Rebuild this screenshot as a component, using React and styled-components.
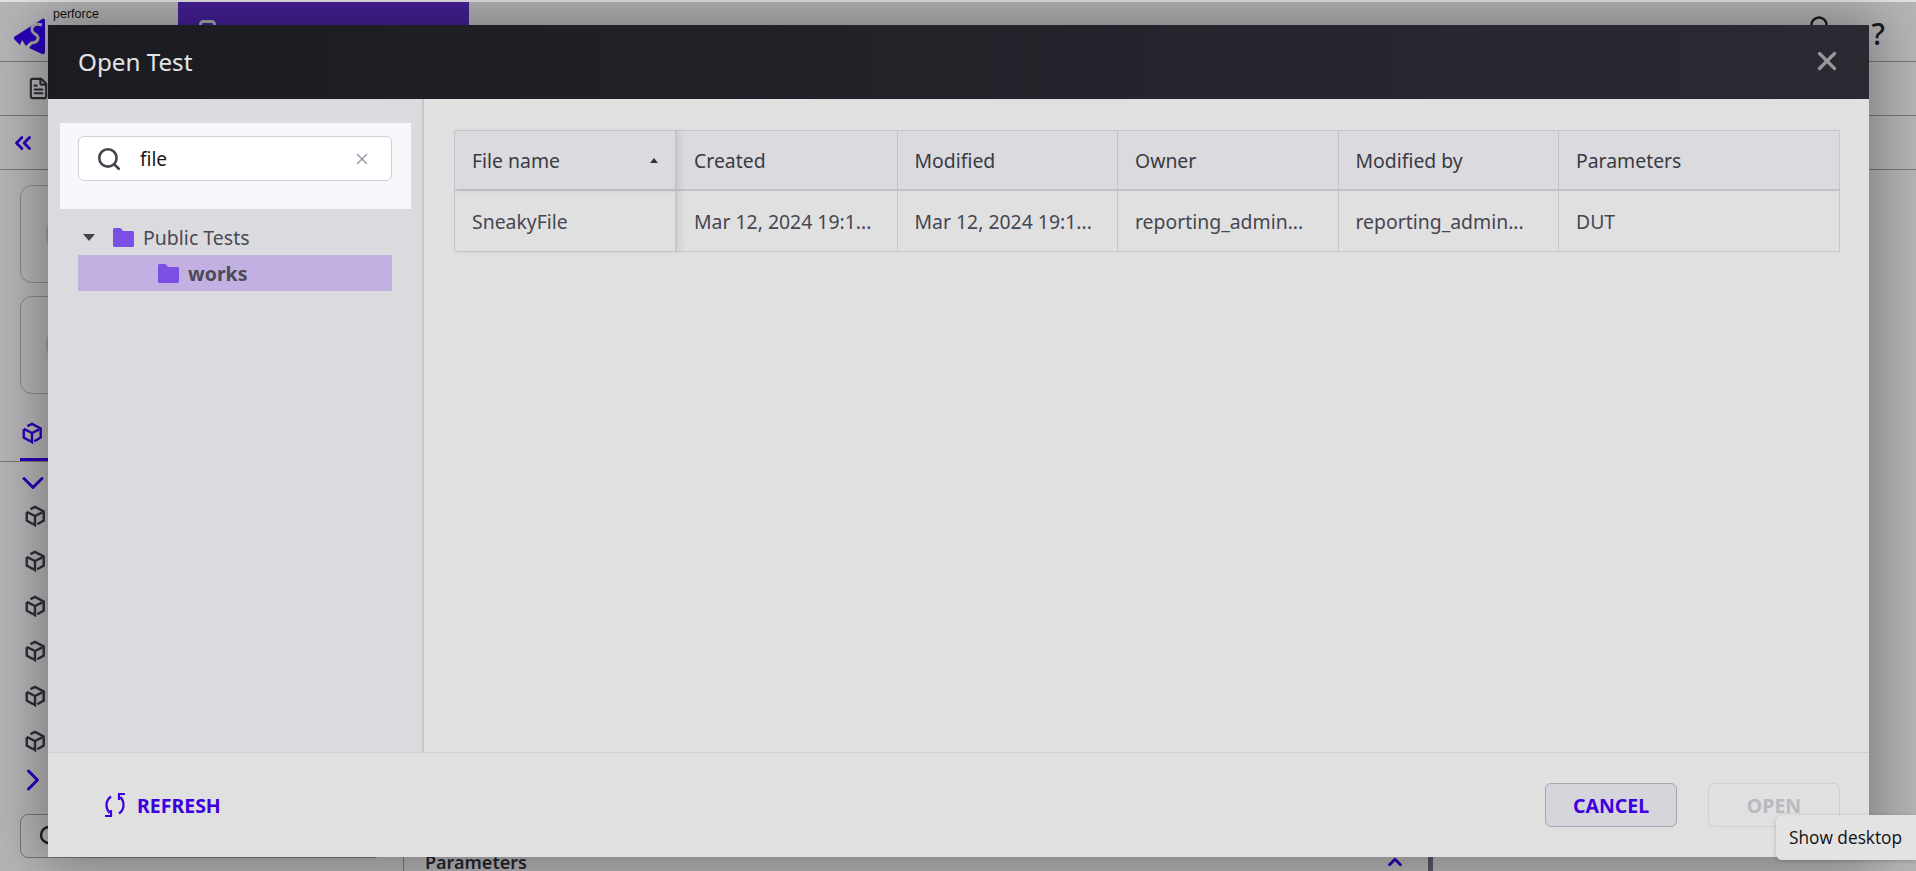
import React from "react";
import styled, { createGlobalStyle } from "styled-components";
import { ChevronDown, ChevronRight, ChevronUp, ChevronsLeft, FileText, Search, X } from "lucide-react";

const columns = ["Created", "Modified", "Owner", "Modified by", "Parameters"];
const rowCells = ["Mar 12, 2024 19:1...", "Mar 12, 2024 19:1...", "reporting_admin...", "reporting_admin...", "DUT"];

const CubeIcon = ({ size = 22, color = "#2e2e3a" }) => (
  <svg width={size} height={size} viewBox="0 0 24 24" fill="none" stroke={color} strokeWidth="2.6">
    <path d="M7 4.5 12 2l9.5 5v10L14.5 21" />
    <path d="M3 8v9l6 3.5" />
    <path d="M3 7.5 12 12l8-4" />
    <path d="M12 12v10l-3-2" />
  </svg>
);

const FolderIcon = () => (
  <svg width="21" height="19" viewBox="0 0 21 19">
    <path
      d="M1.5 0h5.2c.8 0 1.3.4 1.8 1l1.4 2h9.6c.8 0 1.5.7 1.5 1.5v13c0 .8-.7 1.500-1.500 1.500h-18C.7 19 0 18.300 0 17.500V1.500C0 .7.7 0 1.500 0z"
      fill="#7b4fe3"
    />
  </svg>
);

const RefreshIcon = () => (
  <svg width="22" height="24" viewBox="0 0 22 24" fill="none" stroke="#3d00e0" strokeWidth="2.2">
    <path d="M7 3.500C1.500 7.500 1 14.500 5.500 20" />
    <path d="M1 23h6v-6" />
    <path d="M15 20.500C20.500 16.500 21 9.500 16.500 4" />
    <path d="M21 1h-6v6" />
  </svg>
);

const LogoIcon = () => (
  <svg width="32" height="37" viewBox="0 0 32 37">
    <path
      d="M0 19 29 .5Q31 0 31 3v31q0 3-3 2L15 30l4-5-4 0-3 3-4-6-2 5-6-6z"
      fill="#2a00b8"
    />
    <path d="M28 7C18 4 15 12 21 16c5 3 4 9-5 9" fill="none" stroke="#a4a4a6" strokeWidth="3" />
  </svg>
);

const UserIcon = () => (
  <svg width="18" height="24" viewBox="0 0 18 24" fill="none" stroke="#1b1b20" strokeWidth="2.4">
    <circle cx="9" cy="9" r="7.5" />
  </svg>
);

const TabIcon = () => (
  <svg width="17" height="24" viewBox="0 0 17 24" fill="none" stroke="#a8a8b0" strokeWidth="3">
    <rect x="1.500" y="1.500" width="14" height="21" rx="3" />
  </svg>
);

const App = () => (
  <Screen>
    <GlobalStyle />
    <TopStrip />
    <TopBar>
      <Brand>
        <LogoIcon />
        <BrandName>perforce</BrandName>
      </Brand>
      <ActiveTab>
        <TabIcon />
      </ActiveTab>
      <TopActions>
        <UserIcon />
        <HelpMark>?</HelpMark>
      </TopActions>
    </TopBar>
    <ToolBar>
      <FileText size={23} color="#2b2b33" strokeWidth={2.2} />
    </ToolBar>
    <CollapseBar>
      <ChevronsLeft size={26} color="#2a00b8" strokeWidth={2.6} />
    </CollapseBar>
    <Body>
      <Sidebar>
        <SummaryCard>
          <CardDot />
        </SummaryCard>
        <SummaryCard>
          <CardDot />
        </SummaryCard>
        <SideTabs>
          <SideTab>
            <CubeIcon color="#2a00b8" />
          </SideTab>
        </SideTabs>
        <SideTree>
          <TreeToggle $height={20}>
            <ChevronDown size={36} color="#2a00b8" strokeWidth={2} />
          </TreeToggle>
          {[0, 1, 2, 3, 4, 5].map(item => (
            <SideItem key={item}>
              <CubeIcon />
            </SideItem>
          ))}
          <TreeToggle $height={34}>
            <ChevronRight size={36} color="#2a00b8" strokeWidth={2} />
          </TreeToggle>
        </SideTree>
        <SideSearch>
          <Search size={24} color="#1e1e26" strokeWidth={2.4} />
        </SideSearch>
      </Sidebar>
      <Center>
        <ParametersBar>
          <ParametersTitle>Parameters</ParametersTitle>
          <ChevronUp size={22} color="#2a00b8" strokeWidth={3} />
        </ParametersBar>
      </Center>
    </Body>

    <Modal>
      <ModalHeader>
        <ModalTitle>Open Test</ModalTitle>
        <X size={30} color="#98989c" strokeWidth={2.6} />
      </ModalHeader>
      <ModalBody>
        <Aside>
          <SearchPanel>
            <SearchBox>
              <Search size={26} color="#44444f" strokeWidth={2.4} />
              <SearchValue>file</SearchValue>
              <X size={18} color="#9c9cab" strokeWidth={2} />
            </SearchBox>
          </SearchPanel>
          <TreeRow $indent={0}>
            <Caret />
            <FolderIcon />
            <TreeLabel>Public Tests</TreeLabel>
          </TreeRow>
          <TreeRow $indent={80} $selected>
            <FolderIcon />
            <TreeLabel $selected>works</TreeLabel>
          </TreeRow>
        </Aside>
        <Content>
          <Table>
            <HeaderCell $first>
              File name
              <SortCaret />
            </HeaderCell>
            {columns.map(column => (
              <HeaderCell key={column}>{column}</HeaderCell>
            ))}
            <RowCell $first>SneakyFile</RowCell>
            {rowCells.map((cell, i) => (
              <RowCell key={i}>{cell}</RowCell>
            ))}
          </Table>
        </Content>
      </ModalBody>
      <ModalFooter>
        <RefreshButton>
          <RefreshIcon />
          REFRESH
        </RefreshButton>
        <FooterActions>
          <CancelButton>CANCEL</CancelButton>
          <OpenButton disabled>OPEN</OpenButton>
        </FooterActions>
      </ModalFooter>
    </Modal>

    <DesktopTooltip>Show desktop</DesktopTooltip>
  </Screen>
);

const GlobalStyle = createGlobalStyle`
  html, body {
    margin: 0;
    padding: 0;
    overflow: hidden;
  }

  * {
    box-sizing: border-box;
  }
`;

const Screen = styled.div`
  position: relative;
  display: flex;
  flex-direction: column;
  width: 1916px;
  height: 871px;
  overflow: hidden;
  background-color: #b5b5b7;
  font-family: "Noto Sans", sans-serif;
`;

const TopStrip = styled.div`
  flex: none;
  height: 2px;
  background-color: #e2e2e2;
`;

const TopBar = styled.div`
  flex: none;
  display: flex;
  align-items: stretch;
  height: 60px;
  border-bottom: 1px solid #77777b;
`;

const Brand = styled.div`
  position: relative;
  display: flex;
  align-items: flex-start;
  width: 178px;
  padding: 16px 0 0 14px;
`;

const BrandName = styled.span`
  position: absolute;
  top: 5px;
  left: 53px;
  color: #111;
  font-family: "Liberation Sans", sans-serif;
  font-size: 12.500px;
`;

const ActiveTab = styled.div`
  display: flex;
  align-items: flex-start;
  width: 291px;
  padding: 18px 0 0 21px;
  background-color: #452095;
`;

const TopActions = styled.div`
  display: flex;
  align-items: flex-start;
  gap: 44px;
  margin-left: auto;
  padding: 14px 31px 0 0;
`;

const HelpMark = styled.span`
  margin-top: -3px;
  color: #1b1b20;
  font-size: 30px;
  font-weight: 500;
  line-height: 41px;
`;

const ToolBar = styled.div`
  flex: none;
  display: flex;
  align-items: center;
  height: 54px;
  padding-left: 27px;
  border-bottom: 1px solid #77777b;
`;

const CollapseBar = styled.div`
  flex: none;
  display: flex;
  align-items: center;
  height: 54px;
  padding-left: 10px;
  border-bottom: 1px solid #77777b;
`;

const Body = styled.div`
  flex: 1;
  display: flex;
  min-height: 0;
`;

const Sidebar = styled.div`
  flex: none;
  display: flex;
  flex-direction: column;
  width: 404px;
  padding-top: 15px;
  border-right: 1px solid #77777b;
`;

const SummaryCard = styled.div`
  flex: none;
  display: flex;
  align-items: center;
  height: 98px;
  margin: 0 17px 13px 20px;
  padding-left: 25px;
  border: 1px solid #88888c;
  border-radius: 12px;
`;

const CardDot = styled.div`
  width: 50px;
  height: 50px;
  border-radius: 50%;
  background-color: #9a98a6;
`;

const SideTabs = styled.div`
  flex: none;
  display: flex;
  height: 55px;
  padding-left: 20px;
  border-bottom: 1px solid #77777b;
`;

const SideTab = styled.div`
  display: flex;
  align-items: center;
  width: 48px;
  padding: 0 0 0 1px;
  border-bottom: 3px solid #2a00b8;
`;

const SideTree = styled.div`
  flex: none;
  display: flex;
  flex-direction: column;
  padding: 11px 0 0 20px;
`;

const TreeToggle = styled.div`
  display: flex;
  align-items: center;
  height: ${({ $height }) => $height}px;
  margin-left: -5px;
`;

const SideItem = styled.div`
  display: flex;
  align-items: center;
  height: 45px;
  padding-left: 4px;
`;

const SideSearch = styled.div`
  flex: none;
  display: flex;
  align-items: center;
  height: 44px;
  margin: 17px 21px 0 20px;
  padding-left: 17px;
  border: 1px solid #77777b;
  border-radius: 8px;
`;

const Center = styled.div`
  flex: none;
  display: flex;
  flex-direction: column;
  justify-content: flex-end;
  width: 1029px;
  border-right: 5px solid #55556a;
`;

const ParametersBar = styled.div`
  display: flex;
  align-items: center;
  justify-content: space-between;
  height: 24px;
  margin-bottom: -3px;
  padding: 0 22px 0 21px;
`;

const ParametersTitle = styled.span`
  color: #26262e;
  font-size: 18px;
  font-weight: 600;
`;

const Modal = styled.div`
  position: absolute;
  top: 25px;
  left: 48px;
  display: flex;
  flex-direction: column;
  width: 1821px;
  height: 832px;
  background-color: #e0e0e0;
  box-shadow: 0 0 50px 8px rgba(0, 0, 0, 0.33);
`;

const ModalHeader = styled.div`
  flex: none;
  display: flex;
  align-items: center;
  justify-content: space-between;
  height: 74px;
  padding: 0 27px 2px 30px;
  background: linear-gradient(90deg, #1b1c21, #2a2a33);
`;

const ModalTitle = styled.h2`
  margin: 0;
  color: #e4e4e6;
  font-size: 24.200px;
  font-weight: 400;
`;

const ModalBody = styled.div`
  flex: 1;
  display: flex;
  min-height: 0;
`;

const Aside = styled.div`
  flex: none;
  width: 376px;
  padding: 24px 11px 0 12px;
  background-color: #dbdbdf;
  border-right: 2px solid #c6c6cb;
`;

const SearchPanel = styled.div`
  height: 86px;
  margin-bottom: 10px;
  padding: 13px 19px 0 18px;
  background-color: #f7f7fc;
`;

const SearchBox = styled.div`
  display: flex;
  align-items: center;
  height: 45px;
  padding: 0 20px 0 17px;
  border: 1px solid #cfcfd8;
  border-radius: 6px;
  background-color: #fff;
`;

const SearchValue = styled.span`
  flex: 1;
  margin-left: 18px;
  color: #17171b;
  font-size: 19px;
`;

const TreeRow = styled.div`
  display: flex;
  align-items: center;
  height: 36px;
  margin: 0 19px 0 18px;
  padding-left: ${({ $indent }) => $indent}px;
  background-color: ${({ $selected }) => ($selected ? "#c2b0e2" : "transparent")};
`;

const Caret = styled.span`
  width: 0;
  height: 0;
  margin: 0 18px 0 5px;
  border-top: 7px solid #44444f;
  border-left: 6px solid transparent;
  border-right: 6px solid transparent;
`;

const TreeLabel = styled.span`
  margin-left: 9px;
  color: #4a4a55;
  font-size: 19.500px;
  font-weight: ${({ $selected }) => ($selected ? 700 : 400)};
`;

const Content = styled.div`
  flex: 1;
  padding: 31px 29px 0 30px;
`;

const Table = styled.div`
  display: grid;
  grid-template-columns: 222px repeat(4, 220.500px) 1fr;
  grid-auto-rows: 60px;
  border: 1px solid #c6c6cc;
`;

const HeaderCell = styled.div`
  display: flex;
  align-items: center;
  justify-content: space-between;
  padding: 0 17px;
  border-right: ${({ $first }) => ($first ? 2 : 1)}px solid #c2c2c8;
  border-bottom: 2px solid #c2c2c8;
  background-color: #dadadf;
  color: #3a3a44;
  font-size: 19.400px;
  ${({ $first }) => $first && "box-shadow: 4px 0 6px rgba(0, 0, 0, 0.07); position: relative;"}

  &:nth-child(6) {
    border-right: 0;
  }
`;

const RowCell = styled.div`
  display: flex;
  align-items: center;
  padding: 0 17px;
  border-right: ${({ $first }) => ($first ? 2 : 1)}px solid #c6c6cc;
  color: #464652;
  font-size: 19.400px;
  white-space: nowrap;
  ${({ $first }) => $first && "box-shadow: 4px 0 6px rgba(0, 0, 0, 0.07); position: relative;"}

  &:last-child {
    border-right: 0;
  }
`;

const SortCaret = styled.span`
  width: 0;
  height: 0;
  border-bottom: 5px solid #33333c;
  border-left: 4.500px solid transparent;
  border-right: 4.500px solid transparent;
`;

const ModalFooter = styled.div`
  flex: none;
  display: flex;
  align-items: center;
  justify-content: space-between;
  height: 105px;
  padding: 0 29px 0 56px;
  border-top: 1px solid #cfcfd3;
`;

const RefreshButton = styled.div`
  display: flex;
  align-items: center;
  gap: 11px;
  color: #3d00e0;
  font-size: 19.500px;
  font-weight: 700;
`;

const FooterActions = styled.div`
  display: flex;
  gap: 31px;
`;

const CancelButton = styled.button`
  width: 132px;
  height: 44px;
  padding: 0;
  border: 1px solid #a6a6b2;
  border-radius: 6px;
  background-color: #d6d5dc;
  color: #3d00e0;
  font-family: inherit;
  font-size: 19.500px;
  font-weight: 700;
`;

const OpenButton = styled.button`
  width: 132px;
  height: 44px;
  padding: 0;
  border: 1px solid #cfcfd5;
  border-radius: 6px;
  background-color: transparent;
  color: #b9b9c2;
  font-family: inherit;
  font-size: 19.500px;
  font-weight: 700;
`;

const DesktopTooltip = styled.div`
  position: absolute;
  top: 815px;
  right: 0;
  display: flex;
  align-items: center;
  width: 140px;
  height: 45px;
  padding-left: 13px;
  border-radius: 6px 0 0 6px;
  background-color: #e3e3e3;
  box-shadow: 0 1px 4px rgba(0, 0, 0, 0.2);
  color: #111;
  font-family: "Open Sans", sans-serif;
  font-size: 17.300px;
  white-space: nowrap;
`;

export default App;
